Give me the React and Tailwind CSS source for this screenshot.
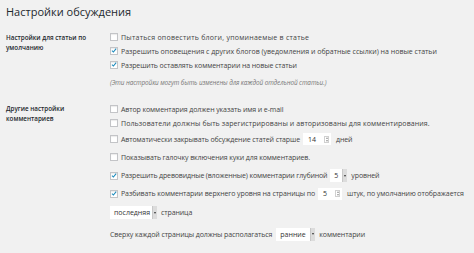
import React from 'react';

const font = { fontFamily: '"Open Sans", "Noto Sans", sans-serif' };

function Check({ on }) {
  return (
    <span className="w-[8px] h-[8px] shrink-0 bg-white border border-[#c3c4c7] shadow-[inset_0_1px_1px_rgba(0,0,0,0.08)] flex items-center justify-center mr-[3px]">
      {on && (
        <svg viewBox="0 0 10 10" className="w-[9px] h-[9px] -mt-[1px]">
          <path d="M1.6 5.2 L4 7.6 L8.6 1.8" fill="none" stroke="#1e8cbe" strokeWidth="1.8" />
        </svg>
      )}
    </span>
  );
}

function NumInput({ value, w = 'w-[28px]' }) {
  return (
    <span className={`${w} h-[12px] bg-white flex items-center justify-between pl-[5px] pr-[2px] mx-[3px] text-[#333] tracking-normal`}>
      <span>{value}</span>
      <span className="w-[5px] h-[7px] border border-[#d0d0d0] flex flex-col items-center justify-center gap-[1px]">
        <span className="w-0 h-0 border-l-[1.5px] border-r-[1.5px] border-b-[2px] border-l-transparent border-r-transparent border-b-[#999]" />
        <span className="w-0 h-0 border-l-[1.5px] border-r-[1.5px] border-t-[2px] border-l-transparent border-r-transparent border-t-[#999]" />
      </span>
    </span>
  );
}

function Select({ value, w, ml = 'ml-[3px]' }) {
  return (
    <span className={`${w} ${ml} mr-[4px] h-[13px] bg-white flex items-stretch justify-between text-[#333] tracking-normal`}>
      <span className="pl-[4px] flex items-center">{value}</span>
      <span className="w-[5px] bg-[#dcdcdc] border-l border-[#c8c8c8] flex items-center justify-center">
        <span className="w-0 h-0 border-l-[1.5px] border-r-[1.5px] border-t-[2px] border-l-transparent border-r-transparent border-t-[#333]" />
      </span>
    </span>
  );
}

function Row({ h, children }) {
  return <div className={`${h} flex items-center`}>{children}</div>;
}

export default function App() {
  return (
    <div className="w-[474px] h-[253px] bg-[#f1f1f1] overflow-hidden text-[7px] text-[#444] leading-[9px] tracking-[-0.1px]" style={font}>
      <h1 className="pl-[6px] pt-[4px] h-[30px] text-[11px] leading-[15px] text-[#23282d] font-normal tracking-normal">Настройки обсуждения</h1>

      <div className="flex">
        <div className="w-[110px] pl-[6px] pt-[3px] font-semibold text-[6.3px] text-[#23282d] leading-[9.5px] tracking-normal">
          Настройки для статьи по<br />умолчанию
        </div>
        <div className="flex flex-col">
          <Row h="h-[14px]"><Check /><span className="tracking-[0.25px]">Пытаться оповестить блоги, упоминаемые в статье</span></Row>
          <Row h="h-[14px]"><Check on /><span className="tracking-normal">Разрешить оповещения с других блогов (уведомления и обратные ссылки) на новые статьи</span></Row>
          <Row h="h-[14px]"><Check on /><span>Разрешить оставлять комментарии на новые статьи</span></Row>
          <div className="h-[20px] flex items-center italic text-[6.4px] text-[#777]">(Эти настройки могут быть изменены для каждой отдельной статьи.)</div>
        </div>
      </div>

      <div className="flex mt-[10px]">
        <div className="w-[110px] pl-[6px] pt-[2px] font-semibold text-[6.3px] text-[#23282d] leading-[9.5px] tracking-normal">
          Другие настройки<br />комментариев
        </div>
        <div className="flex flex-col">
          <Row h="h-[14px]"><Check /><span>Автор комментария должен указать имя и e-mail</span></Row>
          <Row h="h-[14px]"><Check /><span className="tracking-[0.1px]">Пользователи должны быть зарегистрированы и авторизованы для комментирования.</span></Row>
          <Row h="h-[18px]"><Check /><span>Автоматически закрывать обсуждение статей старше</span><NumInput value="14" /><span className="ml-[2px]">дней</span></Row>
          <Row h="h-[18px]"><Check /><span>Показывать галочку включения куки для комментариев.</span></Row>
          <Row h="h-[19px]"><Check on /><span className="tracking-[-0.15px]">Разрешить древовидные (вложенные) комментарии глубиной</span><Select value="5" w="w-[17px]" /><span>уровней</span></Row>
          <Row h="h-[17px]"><Check on /><span>Разбивать комментарии верхнего уровня на страницы по</span><NumInput value="5" w="w-[24px]" /><span className="ml-[2px]">штук, по умолчанию отображается</span></Row>
          <Row h="h-[21px]"><Select value="последняя" w="w-[47px]" ml="ml-0" /><span>страница</span></Row>
          <Row h="h-[22px]"><span>Сверху каждой страницы должны располагаться</span><Select value="ранние" w="w-[39px]" ml="ml-[4px]" /><span>комментарии</span></Row>
        </div>
      </div>
    </div>
  );
}
